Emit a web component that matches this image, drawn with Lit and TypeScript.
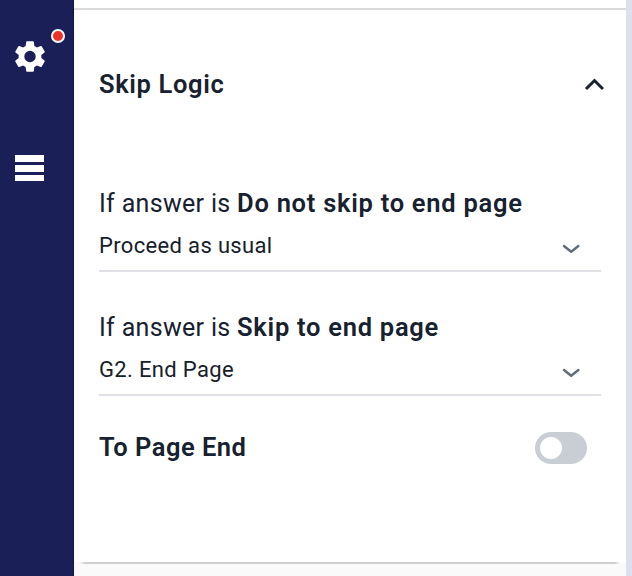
import { LitElement, html, css } from "lit";
import { customElement, property } from "lit/decorators.js";

@customElement("skip-rule")
class SkipRule extends LitElement {
  @property() answer = "";
  @property() action = "";

  static styles = css`
    :host { display: block; height: 124px; }
    .question { height: 36px; line-height: 36px; font-size: 25px; white-space: nowrap; letter-spacing: 0.32px; }
    .answer { font-size: 25.5px; font-weight: 600; letter-spacing: 0.73px; line-height: 1; }
    .select { display: flex; justify-content: space-between; height: 50px; box-sizing: border-box; border-bottom: 2px solid #dfe1e7; padding-right: 20px; }
    .value { font-size: 22px; line-height: 48px; letter-spacing: 0.34px; color: #16202b; }
    svg { width: 20px; height: 12px; margin-top: 21px; }
  `;

  render() {
    return html`
      <div class="question">If answer is <span class="answer">${this.answer}</span></div>
      <div class="select">
        <span class="value">${this.action}</span>
        <svg viewBox="0 0 20 12" fill="none" stroke="#5f6c7c" stroke-width="2.4" stroke-linecap="round" stroke-linejoin="round"><path d="M3 3l7.2 5.8L17.4 3" /></svg>
      </div>
    `;
  }
}

@customElement("app-root")
class AppRoot extends LitElement {
  static styles = css`
    :host { display: flex; width: 632px; height: 576px; overflow: hidden; background: #fff; color: #17212f; font-family: Roboto, "Noto Sans", sans-serif; }
    .rail { width: 74px; flex: none; box-sizing: border-box; background: #1a1f57; border-right: 1px solid #11114e; display: flex; flex-direction: column; }
    .gear { position: relative; width: 38px; height: 38px; margin: 38px 0 0 11px; }
    .gear svg { display: block; width: 38px; height: 38px; }
    .dot { position: absolute; left: 40px; top: -9px; width: 10px; height: 10px; border: 2px solid #fff; border-radius: 50%; background: #ee3124; }
    .menu { display: flex; flex-direction: column; gap: 3px; margin: 79px 0 0 15px; width: 29px; }
    .bar { height: 7px; background: #fff; }
    .bar:last-child { height: 6px; }
    .main { width: 552px; flex: none; display: flex; flex-direction: column; }
    .top { height: 8px; border-bottom: 2px solid #dadada; }
    .card { height: 528px; box-sizing: border-box; margin-top: 24px; border-top: 1px solid #fcfcfc; border-radius: 18px 18px 0 0; padding: 32px 25px 0; }
    .head { display: flex; justify-content: space-between; height: 36px; }
    .title { font-size: 25.5px; line-height: 34px; margin-bottom: 2px; font-weight: 600; letter-spacing: 0.65px; white-space: nowrap; }
    .toggle-row .title { letter-spacing: 0.5px; }
    .head svg { width: 20px; height: 14px; margin: 10px -3px 0 0; }
    .rules { margin-top: 83px; }
    .toggle-row { display: flex; justify-content: space-between; align-items: center; height: 36px; margin-top: -4px; padding-right: 14px; }
    .switch { width: 52px; height: 32px; border-radius: 16px; background: #c9ced5; box-sizing: border-box; padding: 5px; }
    .knob { width: 22px; height: 22px; border-radius: 50%; background: #fff; }
    .foot { flex: 1; background: #fafafa; }
    .rule { height: 2px; margin: 0 6px; background: linear-gradient(90deg, #fafafa, #cfcfcf 5px, #cfcfcf calc(100% - 5px), #fafafa); }
    .edge { width: 6px; flex: none; background: #dee0ef; }
  `;

  render() {
    return html`
      <nav class="rail">
        <div class="gear">
          <svg viewBox="0 0.3 24 24" fill="#fff"><path d="M19.14 12.94c.04-.3.06-.61.06-.94s-.02-.64-.07-.94l2.03-1.58a.49.49 0 0 0 .12-.61l-1.92-3.32a.49.49 0 0 0-.59-.22l-2.39.96a7 7 0 0 0-1.62-.94l-.36-2.54a.48.48 0 0 0-.48-.41h-3.84a.47.47 0 0 0-.47.41l-.36 2.54a7.4 7.4 0 0 0-1.62.94l-2.39-.96a.48.48 0 0 0-.59.22L2.74 8.87a.48.48 0 0 0 .12.61l2.03 1.58a6 6 0 0 0-.02 1.88l-2.03 1.58a.49.49 0 0 0-.12.61l1.92 3.32c.12.22.37.29.59.22l2.39-.96c.5.38 1.03.7 1.62.94l.36 2.54c.05.24.24.41.48.41h3.84c.24 0 .44-.17.47-.41l.36-2.54a7.4 7.4 0 0 0 1.62-.94l2.39.96c.22.08.47 0 .59-.22l1.92-3.32a.47.47 0 0 0-.12-.61zM12 15.6a3.6 3.6 0 1 1 0-7.2 3.6 3.6 0 0 1 0 7.2z" /></svg>
          <span class="dot"></span>
        </div>
        <div class="menu"><div class="bar"></div><div class="bar"></div><div class="bar"></div></div>
      </nav>
      <main class="main">
        <div class="top"></div>
        <section class="card">
          <header class="head">
            <span class="title">Skip Logic</span>
            <svg viewBox="0 0 20 14" fill="none" stroke="#17212f" stroke-width="3"><path d="M2 12l8.5-8.5L19 12" /></svg>
          </header>
          <div class="rules">
            <skip-rule answer="Do not skip to end page" action="Proceed as usual"></skip-rule>
            <skip-rule answer="Skip to end page" action="G2. End Page"></skip-rule>
          </div>
          <div class="toggle-row">
            <span class="title">To Page End</span>
            <div class="switch"><div class="knob"></div></div>
          </div>
        </section>
        <div class="foot"><div class="rule"></div></div>
      </main>
      <div class="edge"></div>
    `;
  }
}
